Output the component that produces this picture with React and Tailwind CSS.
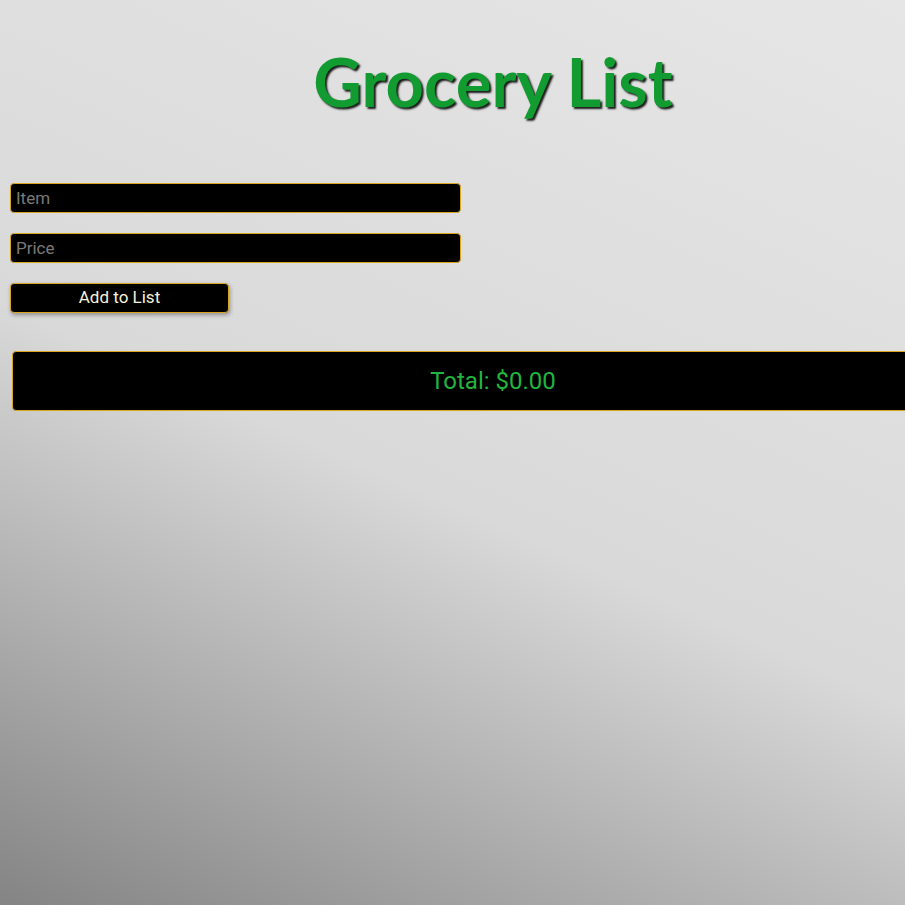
export default function App() {
  return (
    <div className="w-screen h-screen overflow-hidden bg-[linear-gradient(24deg,#848484_0%,#d9d9d9_46%,#e6e6e6_100%)]">
      <div className="w-[986px] font-['Roboto',sans-serif]">
        {/* Heading */}
        <h1 className="pt-[40px] text-center font-['Lato',sans-serif] font-bold text-[67px] leading-[82px] text-[#119b30] [text-shadow:2px_2px_2px_#1a1a1a]">
          Grocery List
        </h1>

        {/* Form */}
        <div className="mt-[61px] pl-[10px] flex flex-col gap-5">
          <input
            type="text"
            placeholder="Item"
            className="w-[451px] h-[30px] px-[5px] bg-black border border-[#daa520] rounded text-[17px] text-white placeholder:text-[#7a7a7a] outline-none"
          />
          <input
            type="text"
            placeholder="Price"
            className="w-[451px] h-[30px] px-[5px] bg-black border border-[#daa520] rounded text-[17px] text-white placeholder:text-[#7a7a7a] outline-none"
          />
          <button className="w-[219px] h-[30px] bg-black border border-[#daa520] rounded text-[17px] text-[#f6f1d8] shadow-[1px_2px_4px_rgba(0,0,0,0.35)]">
            Add to List
          </button>
        </div>

        {/* Total */}
        <div className="mt-[38px] ml-3 mr-3 h-[60px] bg-black border border-[#daa520] rounded flex items-center justify-center">
          <span className="text-[24px] text-[#22b53e]">Total: $0.00</span>
        </div>
      </div>
    </div>
  );
}
